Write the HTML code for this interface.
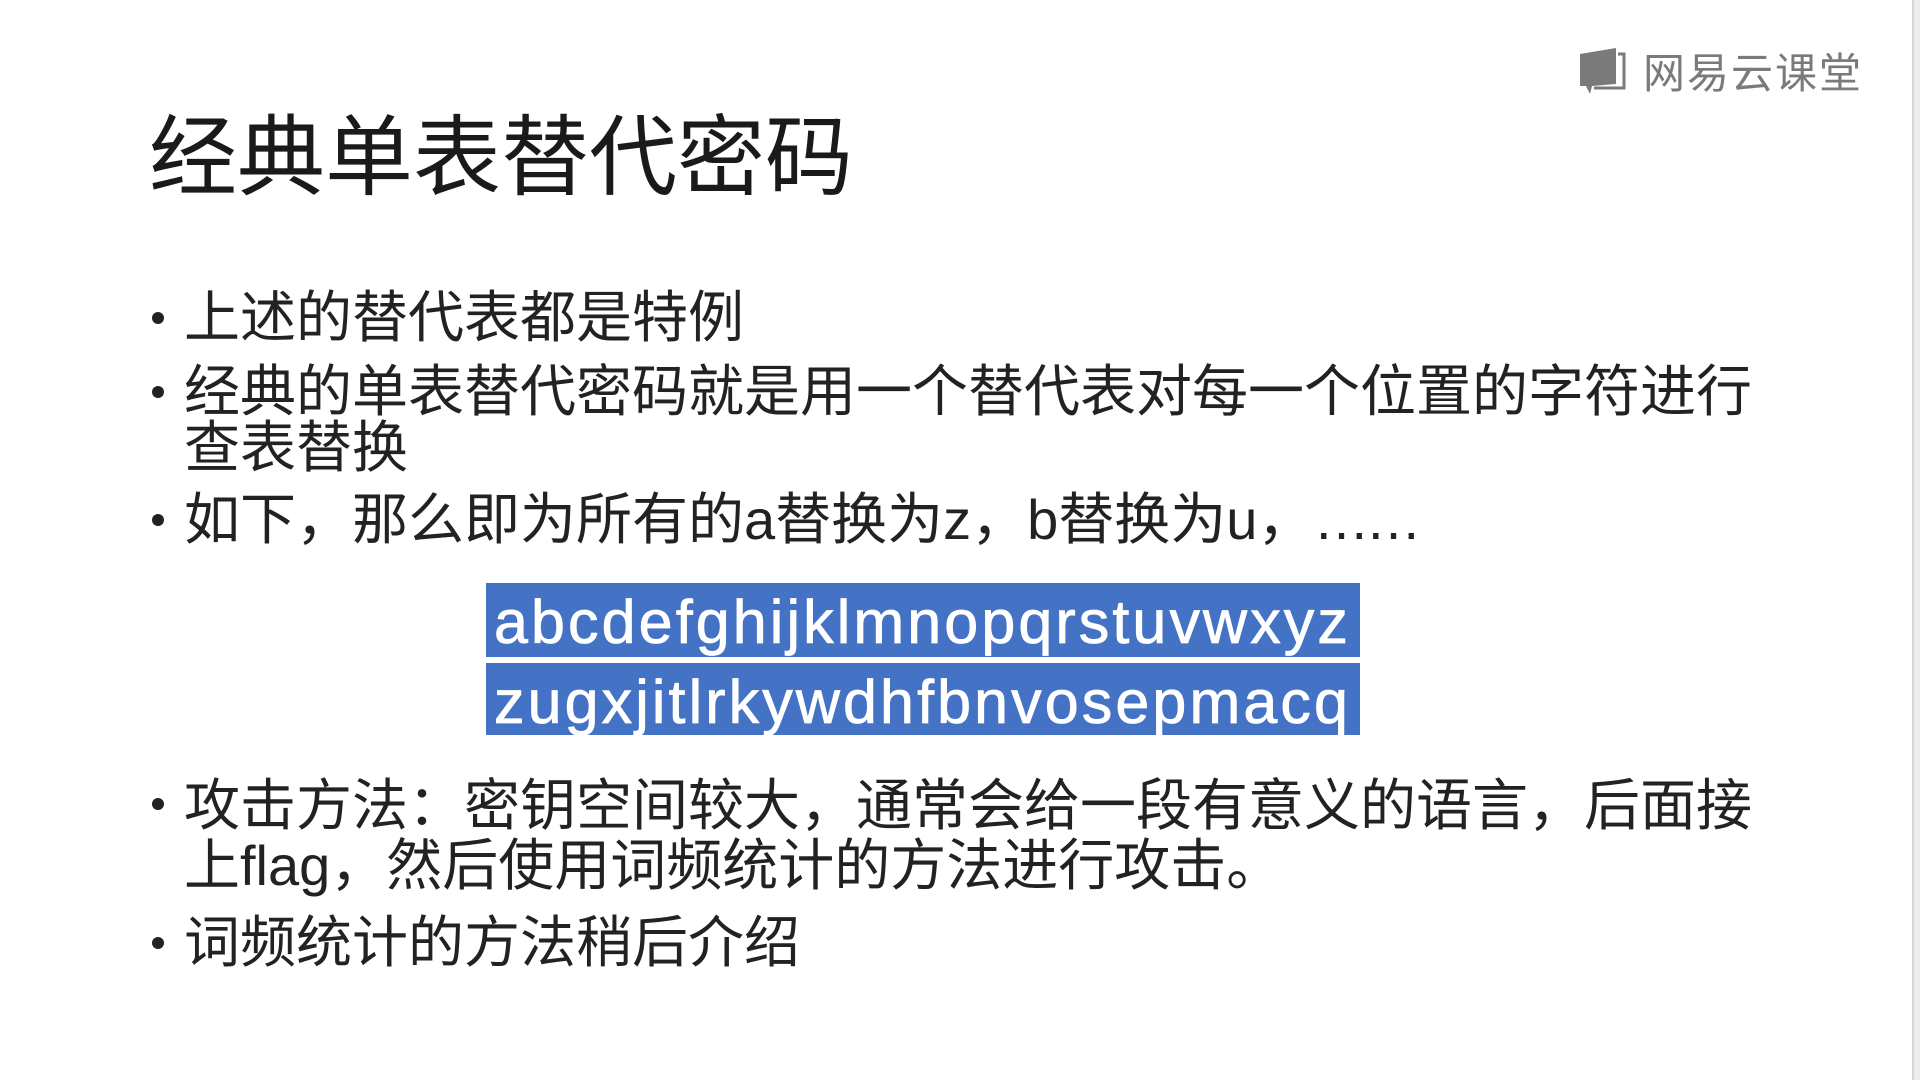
<!DOCTYPE html>
<html><head><meta charset="utf-8"><style>
body{margin:0;width:1920px;height:1080px;background:#fff;position:relative;overflow:hidden;font-family:"Liberation Sans","Noto Sans CJK SC",sans-serif;color:#222}
.t{position:absolute;left:149px;top:108px;font-size:88px;line-height:100px;white-space:nowrap;color:#1a1a1a}
.b{position:absolute;left:184px;font-size:56px;line-height:56px;white-space:nowrap}
.b:before{content:"";position:absolute;left:-32px;top:22px;width:12px;height:12px;border-radius:50%;background:#222}
.box{position:absolute;left:486px;width:874px;background:#4472c4;color:#fff;font-size:61px;line-height:78px;padding-left:8px;box-sizing:border-box;white-space:nowrap;letter-spacing:3.1px;-webkit-text-stroke:0.8px #fff}
.logo{position:absolute;left:1643px;top:40px;font-size:42px;color:#7a7a7a;letter-spacing:2px}
.edge{position:absolute;left:1912px;top:0;width:8px;height:1080px;background:#ececec;border-left:2px solid #d6d6d6}
</style></head><body>
<svg style="position:absolute;left:1578px;top:44px" width="50" height="52" viewBox="0 0 50 52"><path d="M2 10 L38 4 L38 40 L14 42 L12 50 L8 42 L2 42 Z" fill="#7a7a7a"/><path d="M40 10 L46 10 L46 44 L16 44" fill="none" stroke="#7a7a7a" stroke-width="3"/></svg>
<div class="logo">网易云课堂</div>
<div class="edge"></div>
<div class="t">经典单表替代密码</div>
<div class="b" style="top:290px">上述的替代表都是特例</div>
<div class="b" style="top:364px">经典的单表替代密码就是用一个替代表对每一个位置的字符进行<br>查表替换</div>
<div class="b" style="top:492px">如下，那么即为所有的a替换为z，b替换为u，<span style="letter-spacing:-4px">……</span></div>
<div class="box" style="top:583px;height:74px">abcdefghijklmnopqrstuvwxyz</div>
<div class="box" style="top:663px;height:72px">zugxjitlrkywdhfbnvosepmacq</div>
<div class="b" style="top:776px;line-height:60px">攻击方法：密钥空间较大，通常会给一段有意义的语言，后面接<br>上flag，然后使用词频统计的方法进行攻击。</div>
<div class="b" style="top:915px">词频统计的方法稍后介绍</div>
</body></html>
